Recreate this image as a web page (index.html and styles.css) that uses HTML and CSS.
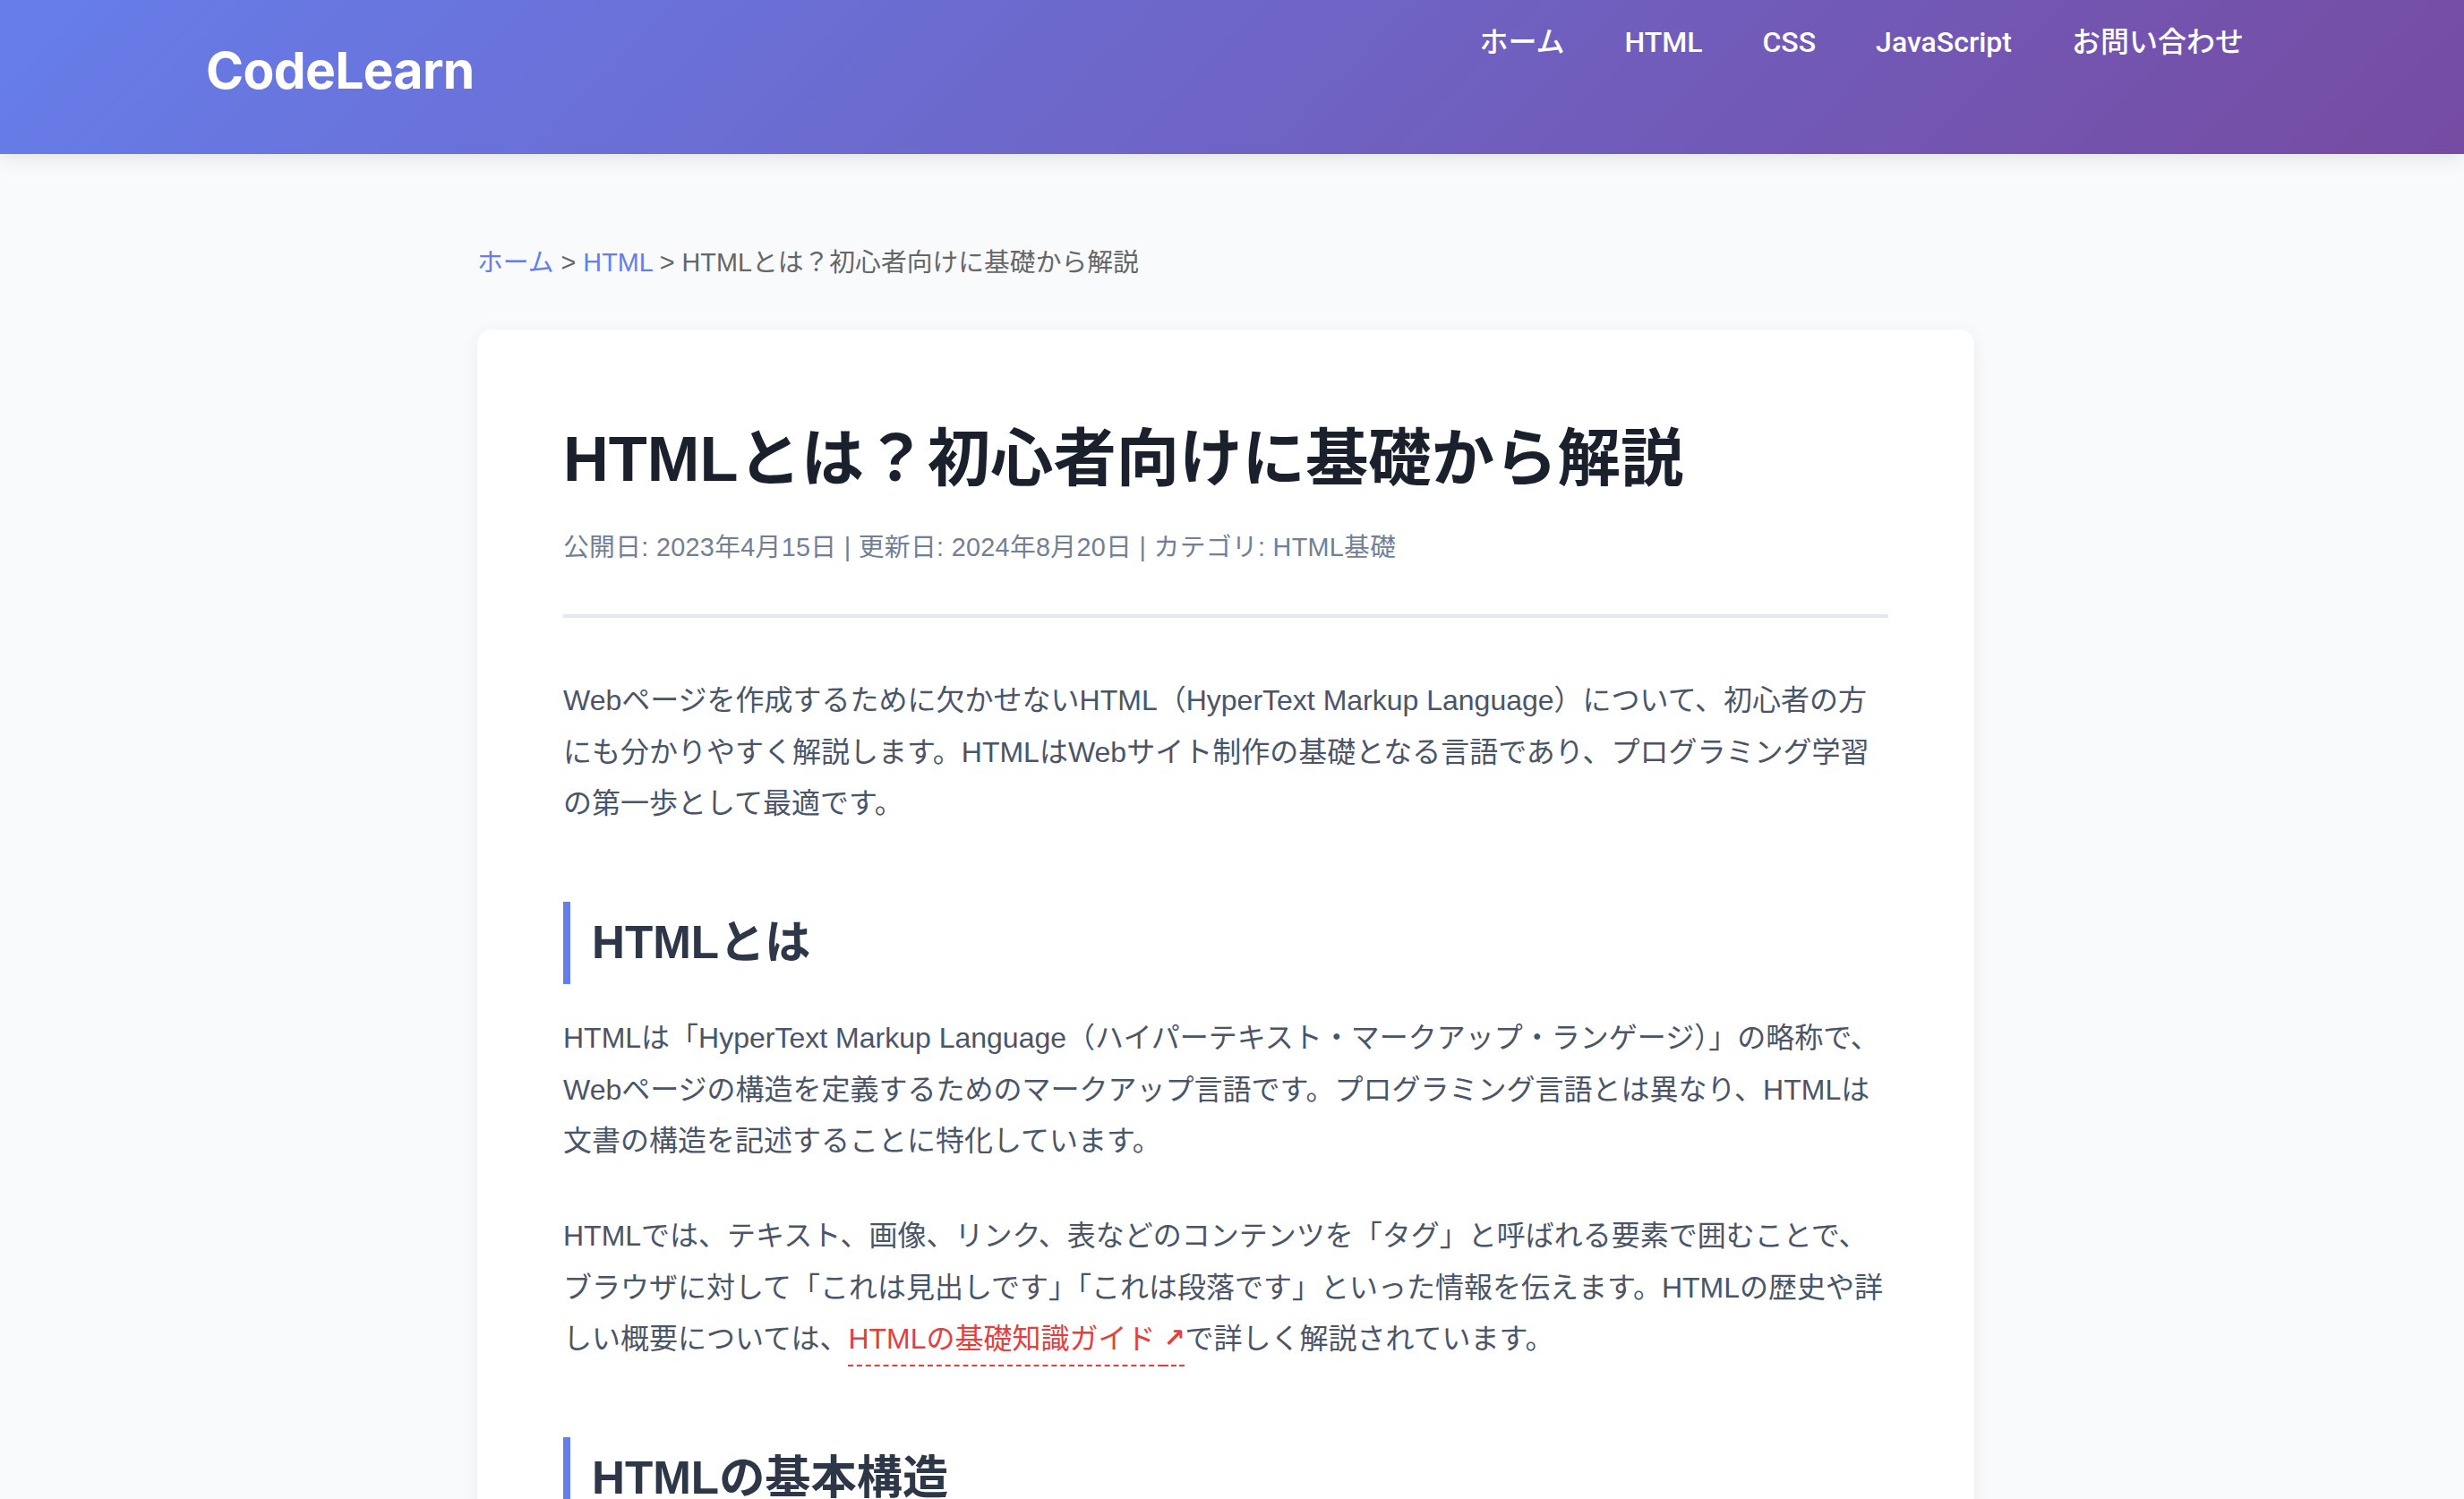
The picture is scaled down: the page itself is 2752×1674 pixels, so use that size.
FILE: index.html
```html
<!DOCTYPE html>
<html lang="ja">
<head>
<meta charset="UTF-8">
<title>HTMLとは？初心者向けに基礎から解説 | CodeLearn</title>
<link rel="stylesheet" href="styles.css">
</head>
<body>
<header class="site-header">
  <div class="header-inner">
    <a class="logo" href="#">CodeLearn</a>
    <nav class="main-nav">
      <a class="nav-link" href="#">ホーム</a>
      <a class="nav-link" href="#">HTML</a>
      <a class="nav-link" href="#">CSS</a>
      <a class="nav-link" href="#">JavaScript</a>
      <a class="nav-link" href="#">お問い合わせ</a>
    </nav>
  </div>
</header>
<main class="page">
  <nav class="breadcrumb">
    <a class="crumb-link" href="#">ホーム</a> &gt; <a class="crumb-link" href="#">HTML</a> &gt; <span class="crumb-current">HTMLとは？初心者向けに基礎から解説</span>
  </nav>
  <article class="article-card">
    <header class="article-header">
      <h1 class="article-title">HTMLとは？初心者向けに基礎から解説</h1>
      <p class="article-meta">公開日: 2023年4月15日 | 更新日: 2024年8月20日 | カテゴリ: HTML基礎</p>
    </header>
    <p class="body-text">Webページを作成するために欠かせないHTML（HyperText Markup Language）について、初心者の方にも分かりやすく解説します。HTMLはWebサイト制作の基礎となる言語であり、プログラミング学習の第一歩として最適です。</p>
    <h2 class="section-title">HTMLとは</h2>
    <p class="body-text">HTMLは「HyperText Markup Language（ハイパーテキスト・マークアップ・ランゲージ）」の略称で、Webページの構造を定義するためのマークアップ言語です。プログラミング言語とは異なり、HTMLは文書の構造を記述することに特化しています。</p>
    <p class="body-text">HTMLでは、テキスト、画像、リンク、表などのコンテンツを「タグ」と呼ばれる要素で囲むことで、ブラウザに対して「これは見出しです」「これは段落です」といった情報を伝えます。HTMLの歴史や詳しい概要については、<a class="ext-link" href="#">HTMLの基礎知識ガイド <span class="ext-icon">↗</span></a>で詳しく解説されています。</p>
    <h2 class="section-title">HTMLの基本構造</h2>
  </article>
</main>
</body>
</html>
```

FILE: styles.css
```css
* {
  box-sizing: border-box;
}

body {
  margin: 0;
  background: #f8fafc;
  font-family: "Liberation Sans", "Noto Sans CJK JP", sans-serif;
  color: #4a5568;
}

/* Header */
.site-header {
  height: 172px;
  background: linear-gradient(135deg, #667eea 0%, #764ba2 100%);
  box-shadow: 0 4px 20px rgba(0, 0, 0, 0.1);
}

.header-inner {
  max-width: 2292px;
  margin: 0 auto;
  display: flex;
  justify-content: space-between;
  align-items: flex-start;
}

.logo {
  margin-top: 50px;
  font-family: Inter, "Liberation Sans", sans-serif;
  font-weight: 700;
  font-size: 57px;
  line-height: 1;
  color: #fff;
  text-decoration: none;
  letter-spacing: -0.7px;
}

.main-nav {
  display: flex;
  gap: 35px;
  margin-top: 31px;
}

.nav-link {
  padding: 0 16px;
  font-family: Roboto, "Noto Sans CJK JP", sans-serif;
  font-weight: 500;
  font-size: 32px;
  line-height: 1;
  color: #fff;
  text-decoration: none;
}

/* Page */
.page {
  max-width: 1686px;
  margin: 0 auto;
  padding: 96px 14px 0 0;
}

.breadcrumb {
  margin-bottom: 48px;
  font-size: 28.8px;
  line-height: 1.8;
  color: #666;
}

.crumb-link {
  color: #667eea;
  text-decoration: none;
}

.article-card {
  background: #fff;
  border-radius: 16px;
  padding: 96px;
  box-shadow: 0 4px 20px rgba(0, 0, 0, 0.06);
}

.article-header {
  padding-bottom: 48px;
  border-bottom: 4px solid #e2e8f0;
  margin-bottom: 64px;
}

.article-title {
  margin: 0 0 24px;
  font-size: 70.4px;
  line-height: 1.4;
  font-weight: 700;
  color: #1a202c;
}

.article-meta {
  margin: 0;
  font-size: 28.8px;
  line-height: 1.8;
  letter-spacing: 0.3px;
  color: #718096;
}

.body-text {
  margin: 0 0 48px;
  font-size: 32px;
  line-height: 1.8;
}

.section-title {
  margin: 80px 0 32px;
  padding-left: 24px;
  border-left: 8px solid #667eea;
  font-size: 51.2px;
  line-height: 1.8;
  font-weight: 700;
  color: #2d3748;
}

.ext-link {
  color: #e53e3e;
  text-decoration: underline dashed #e53e3e;
  text-decoration-thickness: 2px;
  text-underline-offset: 18px;
}

.ext-icon {
  font-family: "DejaVu Sans", sans-serif;
  font-weight: 700;
  font-size: 0.9em;
  vertical-align: 2px;
}
```
